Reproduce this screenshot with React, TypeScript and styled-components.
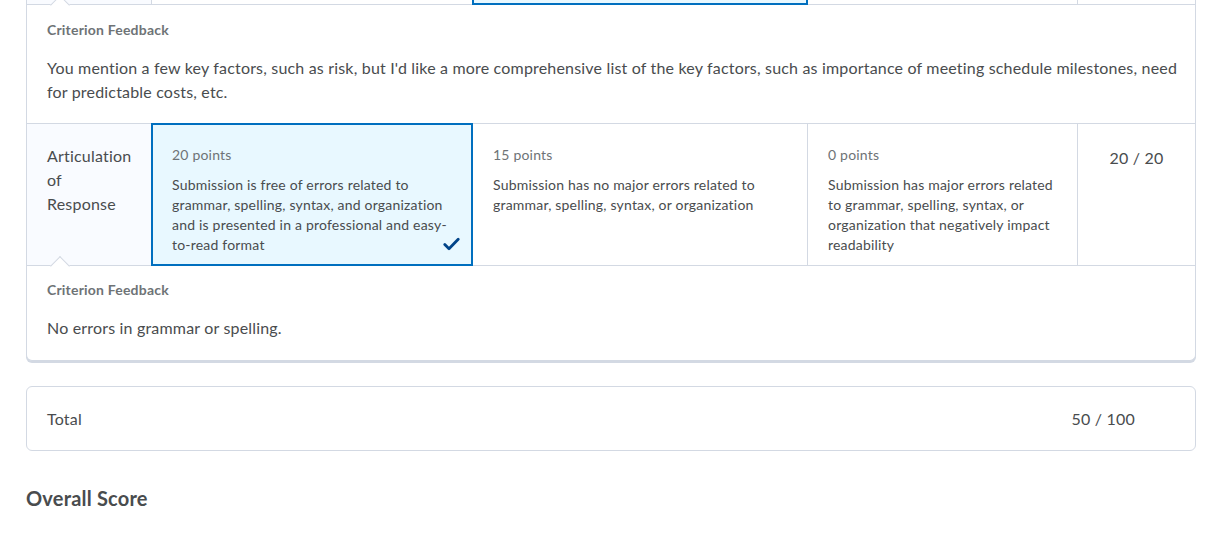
import React from 'react'
import styled, { createGlobalStyle, css } from 'styled-components'

const GlobalStyle = createGlobalStyle`
  html, body {
    margin: 0;
    padding: 0;
    background: #ffffff;
  }
  body {
    font-family: Lato, 'Open Sans', 'Liberation Sans', sans-serif;
    color: #494c4e;
  }
`

interface Level {
  points: number
  description: string
}

interface Criterion {
  name: string
  levels: Level[]
  selected: number
  score: string
  feedback: string
}

const articulation: Criterion = {
  name: 'Articulation of Response',
  levels: [
    {
      points: 20,
      description:
        'Submission is free of errors related to grammar, spelling, syntax, and organization and is presented in a professional and easy-to-read format',
    },
    {
      points: 15,
      description: 'Submission has no major errors related to grammar, spelling, syntax, or organization',
    },
    {
      points: 0,
      description:
        'Submission has major errors related to grammar, spelling, syntax, or organization that negatively impact readability',
    },
  ],
  selected: 0,
  score: '20 / 20',
  feedback: 'No errors in grammar or spelling.',
}

const previousFeedback =
  "You mention a few key factors, such as risk, but I'd like a more comprehensive list of the key factors, such as importance of meeting schedule milestones, need for predictable costs, etc."

const CheckIcon = () => (
  <svg width="17" height="14" viewBox="0 0 17 14" fill="none">
    <path d="M1.8 7.6 L6 11.8 L15.2 2.2" stroke="#004489" strokeWidth="2.8" strokeLinecap="round" strokeLinejoin="round" />
  </svg>
)

const RubricCriterionRow: React.FC<{ criterion: Criterion }> = ({ criterion }) => (
  <Row>
    <NameCell>{criterion.name}</NameCell>
    {criterion.levels.map((level, i) => (
      <LevelCell key={level.points} $selected={i === criterion.selected}>
        <Points>{level.points} points</Points>
        <Description>{level.description}</Description>
        {i === criterion.selected && (
          <Check>
            <CheckIcon />
          </Check>
        )}
      </LevelCell>
    ))}
    <ScoreCell>{criterion.score}</ScoreCell>
  </Row>
)

const CriterionFeedback: React.FC<{ text: string; first?: boolean }> = ({ text, first }) => (
  <Feedback $first={first}>
    <Caret />
    <FeedbackTitle>Criterion Feedback</FeedbackTitle>
    <FeedbackText>{text}</FeedbackText>
  </Feedback>
)

export default function App() {
  return (
    <>
      <GlobalStyle />
      <Page>
        <RubricCard>
          {/* tail of the criterion above, scrolled mostly out of view */}
          <RowTail>
            <TailCell $first />
            <TailCell />
            <TailCell $selected />
            <TailCell />
            <TailCell $last />
          </RowTail>
          <CriterionFeedback text={previousFeedback} first />
          <RubricCriterionRow criterion={articulation} />
          <CriterionFeedback text={articulation.feedback} />
        </RubricCard>

        <TotalCard>
          <span>Total</span>
          <span>50 / 100</span>
        </TotalCard>

        <Heading>Overall Score</Heading>
      </Page>
    </>
  )
}

const columns = '125px 321px 335px 270px 1fr'

const Page = styled.div`
  padding: 0 27px 40px 26px;
`

const RubricCard = styled.div`
  border: 1px solid #d3d9e3;
  border-top: none;
  border-radius: 0 0 6px 6px;
  box-shadow: 0 2px 0 0 #d3d9e3;
  background: #ffffff;
`

const RowTail = styled.div`
  display: grid;
  grid-template-columns: ${columns};
  height: 4px;
  border-bottom: 1px solid #d3d9e3;
`

const TailCell = styled.div<{ $first?: boolean; $selected?: boolean; $last?: boolean }>`
  position: relative;
  border-right: ${(p) => (p.$last ? 'none' : '1px solid #d3d9e3')};
  background: ${(p) => (p.$first ? '#f9fbff' : p.$selected ? '#e8f8ff' : '#ffffff')};

  ${(p) =>
    p.$selected &&
    css`
      &::after {
        content: '';
        position: absolute;
        left: -1px;
        right: -1px;
        top: -4px;
        bottom: -1px;
        border: 2px solid #006fbf;
        pointer-events: none;
      }
    `}
`

const Row = styled.div`
  display: grid;
  grid-template-columns: ${columns};
  border-bottom: 1px solid #d3d9e3;
`

const NameCell = styled.div`
  padding: 20px 20px 10px;
  border-right: 1px solid #d3d9e3;
  background: #f9fbff;
  font-size: 16px;
  line-height: 24px;
  letter-spacing: 0.2px;
  color: #494c4e;
`

const LevelCell = styled.div<{ $selected: boolean }>`
  position: relative;
  padding: 21px 20px 10px;
  border-right: 1px solid #d3d9e3;
  background: ${(p) => (p.$selected ? '#e8f8ff' : '#ffffff')};

  ${(p) =>
    p.$selected &&
    css`
      &::after {
        content: '';
        position: absolute;
        left: -1px;
        right: -1px;
        top: -1px;
        bottom: -1px;
        border: 2px solid #006fbf;
        pointer-events: none;
      }
    `}
`

const Points = styled.div`
  font-size: 14px;
  line-height: 20px;
  letter-spacing: 0.2px;
  color: #6e7376;
`

const Description = styled.div`
  margin-top: 10px;
  font-size: 14px;
  line-height: 20px;
  letter-spacing: 0.2px;
  color: #494c4e;
`

const Check = styled.div`
  position: absolute;
  right: 12px;
  bottom: 14px;
  line-height: 0;
`

const ScoreCell = styled.div`
  padding: 22px 10px 10px;
  text-align: center;
  font-size: 16px;
  line-height: 24px;
  letter-spacing: 0.2px;
  color: #494c4e;
`

const Feedback = styled.div<{ $first?: boolean }>`
  position: relative;
  padding: ${(p) => (p.$first ? '15px 12px 19px 20px' : '14px 12px 20px 20px')};
  border-bottom: ${(p) => (p.$first ? '1px solid #d3d9e3' : 'none')};
`

const Caret = styled.span`
  position: absolute;
  left: 26px;
  top: -7px;
  width: 13px;
  height: 13px;
  background: #ffffff;
  border-top: 1px solid #d3d9e3;
  border-left: 1px solid #d3d9e3;
  transform: rotate(45deg);
`

const FeedbackTitle = styled.div`
  position: relative;
  font-size: 14px;
  line-height: 20px;
  font-weight: 700;
  letter-spacing: 0.2px;
  color: #6e7376;
`

const FeedbackText = styled.p`
  margin: 16px 0 0;
  font-size: 16px;
  line-height: 24px;
  letter-spacing: 0.18px;
  color: #494c4e;
`

const TotalCard = styled.div`
  margin-top: 25px;
  height: 65px;
  box-sizing: border-box;
  display: flex;
  align-items: center;
  justify-content: space-between;
  padding: 0 60px 0 20px;
  border: 1px solid #d3d9e3;
  border-radius: 6px;
  font-size: 16px;
  letter-spacing: 0.2px;
  color: #494c4e;
`

const Heading = styled.h2`
  margin: 33px 0 0;
  font-size: 20px;
  line-height: 28px;
  font-weight: 700;
  letter-spacing: 0.2px;
  color: #494c4e;
`
